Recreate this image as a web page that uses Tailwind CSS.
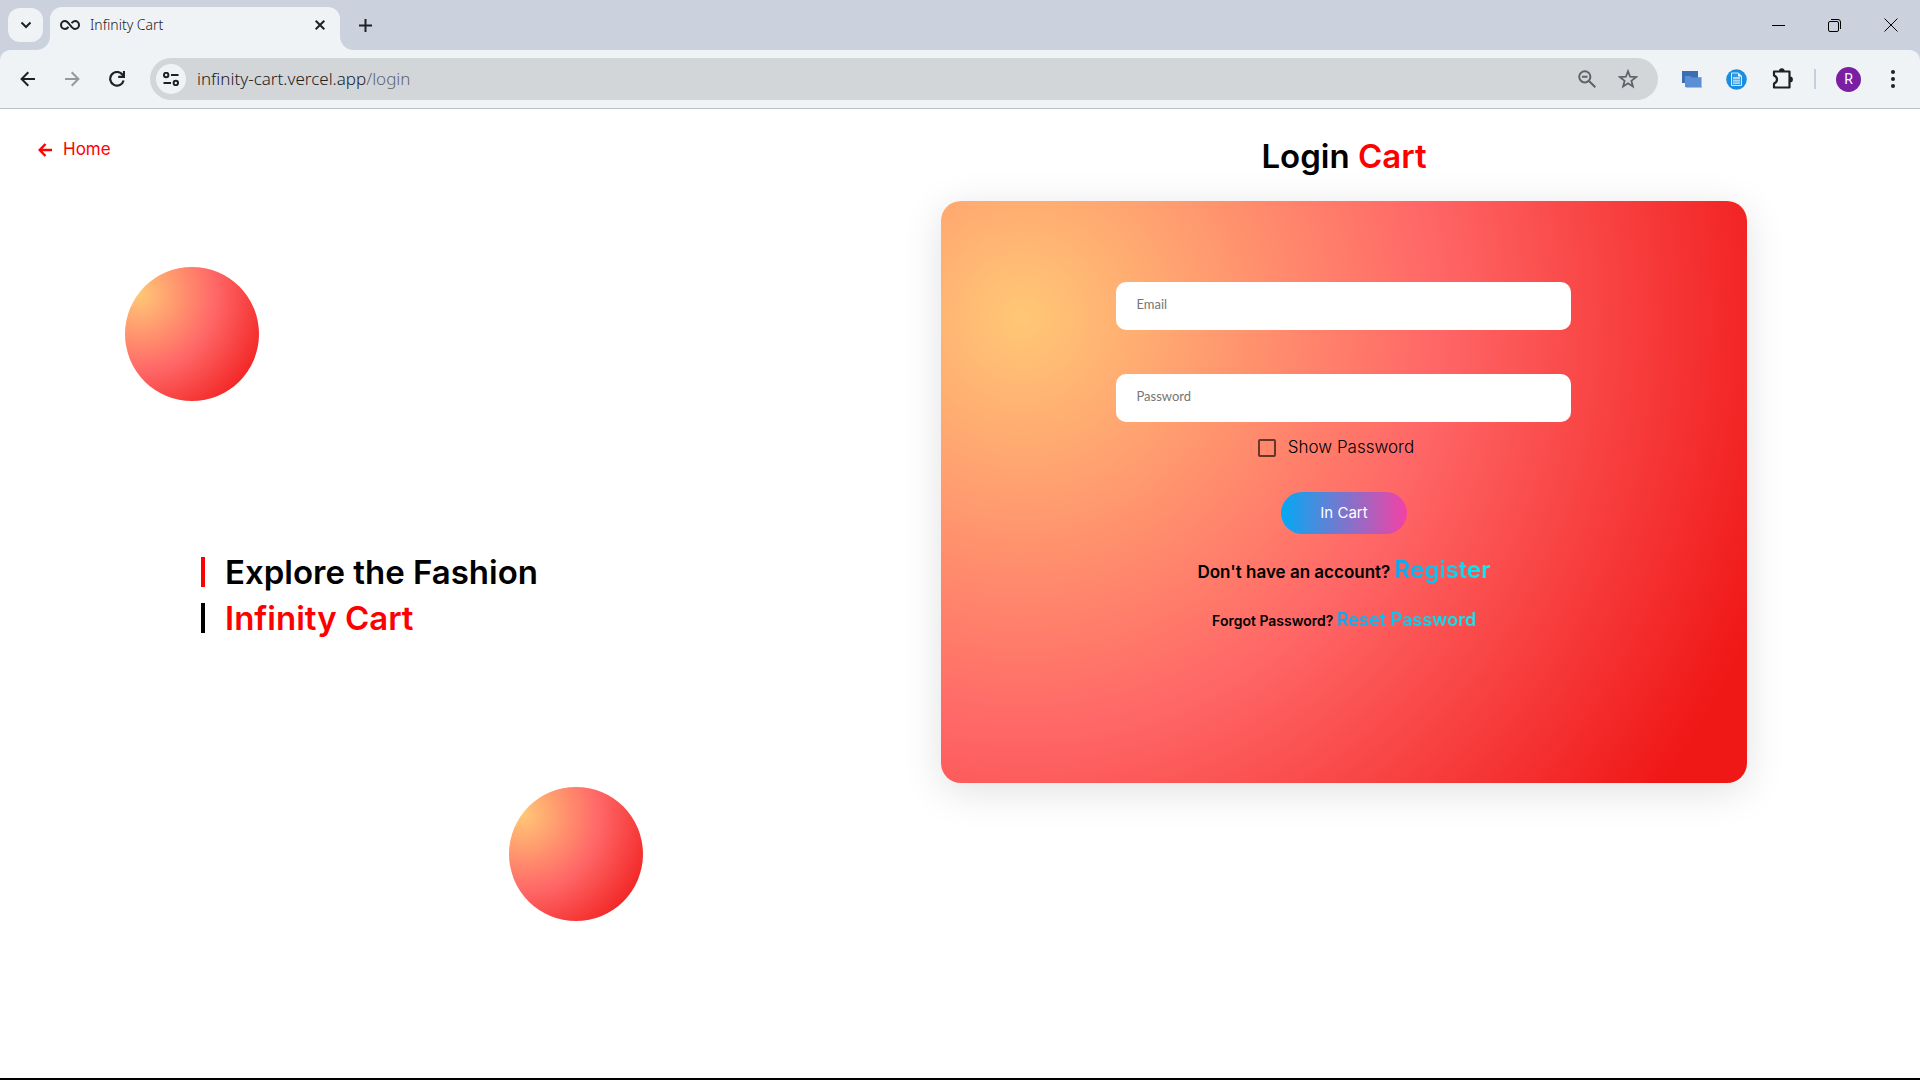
<!DOCTYPE html>
<html lang="en">
<head>
<meta charset="utf-8">
<title>Infinity Cart</title>
<script src="https://cdn.jsdelivr.net/npm/@tailwindcss/browser@4"></script>
</head>
<body class="flex min-h-screen flex-col bg-white font-['Inter',sans-serif] text-black">
<header class="bg-[#cbd2de] font-['Noto_Sans',sans-serif]">
  <div class="flex h-[50px] items-end pl-2">
    <button aria-label="Search tabs" class="mb-2 grid h-[34px] w-[35px] place-items-center rounded-xl bg-[#eff3f6]">
      <svg class="size-3" viewBox="0 0 12 12" fill="none" stroke="#1f2023" stroke-width="2"><path d="M1.500 3.500 6 8l4.500-4.500"/></svg>
    </button>
    <svg class="ml-[-7px] size-[14px] shrink-0" viewBox="0 0 14 14" fill="#eff3f6"><path d="M14 0v14H0C8 14 14 8 14 0z"/></svg>
    <div class="flex h-[43px] w-[290px] items-center rounded-t-xl bg-[#eff3f6] pr-[15px] pb-[7px] pl-[10px]">
      <svg class="h-[12px] w-5" viewBox="0 0 20 12" fill="none" stroke="#1f2023" stroke-width="2"><path d="M11.500 4.200C13 2.500 13.800 2 15 2a4 4 0 0 1 0 8c-2 0-3-1.300-5-4S7 2 5 2a4 4 0 0 0 0 8c1.300 0 2.200-.5 3.500-2.200"/></svg>
      <span class="ml-[10px] text-sm font-light text-[#1f2023]">Infinity Cart</span>
      <button aria-label="Close tab" class="ml-auto"><svg class="size-[10px]" viewBox="0 0 10 10" stroke="#1f2023" stroke-width="2"><path d="m.7.700 8.600 8.600M9.300.700.700 9.300"/></svg></button>
    </div>
    <svg class="size-[14px] shrink-0" viewBox="0 0 14 14" fill="#eff3f6"><path d="M0 0v14h14C6 14 0 8 0 0z"/></svg>
    <button aria-label="New tab" class="mb-[18px] ml-[5px]"><svg class="size-[13px]" viewBox="0 0 13 13" stroke="#1f2023" stroke-width="2"><path d="M6.500 0v13M0 6.500h13"/></svg></button>
    <div class="mr-[22px] mb-[18px] ml-auto flex items-center gap-[43px]">
      <button aria-label="Minimize"><svg class="size-[13px]" viewBox="0 0 13 13" stroke="#000"><path d="M0 6.500h13"/></svg></button>
      <button aria-label="Restore"><svg class="size-[13px]" viewBox="0 0 13 13" fill="none" stroke="#000"><rect x=".5" y="2.500" width="10" height="10" rx="1.500"/><path d="M3 .500h7A2.500 2.500 0 0 1 12.500 3v7"/></svg></button>
      <button aria-label="Close"><svg class="size-[14px]" viewBox="0 0 14 14" stroke="#000"><path d="m.5.500 13 13M13.500.500l-13 13"/></svg></button>
    </div>
  </div>
  <div class="flex h-[59px] items-center rounded-t-[10px] border-b border-[#bcc1c7] bg-[#eff3f6] pr-[25px] pl-5">
    <button aria-label="Back"><svg class="size-4" viewBox="0 0 16 16" fill="none" stroke="#1f2023" stroke-width="2"><path d="M15 8H2M8.300 1.300 1.600 8l6.700 6.700"/></svg></button>
    <button aria-label="Forward" class="ml-7"><svg class="size-4" viewBox="0 0 16 16" fill="none" stroke="#96999c" stroke-width="2"><path d="M1 8h13M7.700 1.300 14.400 8l-6.700 6.700"/></svg></button>
    <button aria-label="Reload" class="ml-[29px]"><svg class="size-4" viewBox="0 0 16 16" fill="none" stroke="#1f2023" stroke-width="2.200"><path d="M14.600 9.500A6.800 6.800 0 1 1 13.300 3.500L14.500 5"/><path d="M15 0v5.800H9.200"/></svg></button>
    <div class="ml-[25px] flex h-[42px] flex-1 items-center rounded-full bg-[#d2d6d9] pr-5 pl-[6px]">
      <button aria-label="Site information" class="grid size-[30px] shrink-0 place-items-center rounded-full bg-[#eff3f6]"><svg class="h-[14px] w-4" viewBox="0 0 16 14" fill="none" stroke="#1f2023" stroke-width="2"><circle cx="3.200" cy="3" r="2.200"/><path d="M8 3h7.500M.500 11H8"/><circle cx="12.800" cy="11" r="2.200"/></svg></button>
      <div class="ml-[11px] text-[17px] leading-6 font-light text-[#5f6368]"><span class="text-[#1f2023]">infinity-cart.vercel.app</span>/login</div>
      <button aria-label="Zoom" class="ml-auto"><svg class="size-[18px]" viewBox="0 0 18 18" fill="none" stroke="#5f6368" stroke-width="2"><circle cx="6.800" cy="6.800" r="5.600"/><path d="m11 11 6.300 6.300M4 6.800h5.500"/></svg></button>
      <button aria-label="Bookmark" class="ml-[22px]"><svg class="size-5" viewBox="0 0 20 20" fill="none" stroke="#5f6368" stroke-width="1.800"><path d="m10 2.200 2.100 5.500 5.900.4-4.600 3.700 1.500 5.700L10 14.300l-4.900 3.200 1.500-5.700L2 8.100l5.900-.4z"/></svg></button>
    </div>
    <div class="ml-6 flex items-center">
      <svg class="size-5" viewBox="0 0 20 20"><path d="M4 8h16v11H4z" fill="#b7bcc2"/><path d="M0 2h16v12H0z" fill="#3a6fb3"/><path d="M3 7h5l2 1.500h9V18H3z" fill="#5b8fd3"/></svg>
      <svg class="ml-6 size-[21px]" viewBox="0 0 21 21"><circle cx="10.500" cy="10.500" r="10.300" fill="#1b8de0"/><path d="M5.500 4h7l3 3V16.500h-10z" fill="#2f97e2" stroke="#d5ecfb"/><path d="M12 4v3.500h3.500z" fill="#fff"/><path d="M7 8h7v7H7z" fill="#a8d6f6"/><path d="M7 10.500h7M7 13h7" stroke="#5db0ea"/></svg>
      <svg class="ml-[25px] size-[22px]" viewBox="0 0 22 22"><path d="M2 3.500h15.500V19.500H2V15.500c4-1.500 4-6.500 0-8z" fill="none" stroke="#1f2023" stroke-width="2.200" stroke-linejoin="round"/><path d="M7 3a2.800 2.800 0 0 1 5.600 0zM18 8.500a2.900 2.900 0 0 1 0 5.800z" fill="#1f2023"/></svg>
      <span class="ml-5 h-5 w-[2px] bg-[#c5cede]"></span>
      <button class="ml-5 grid size-[25px] place-items-center rounded-full bg-[#7b1fa2] font-['Roboto',sans-serif] text-sm leading-none text-white">R</button>
      <button aria-label="Menu" class="ml-[30px]"><svg class="h-[18px] w-1" viewBox="0 0 4 18" fill="#1f2023"><circle cx="2" cy="2" r="2"/><circle cx="2" cy="9" r="2"/><circle cx="2" cy="16" r="2"/></svg></button>
    </div>
  </div>
</header>
<main class="grid flex-1 grid-cols-[49%_42%] border-b-2 border-black">
  <section class="pt-[29px] pl-[38px]">
    <a href="#" class="flex h-6 w-fit items-center gap-[11px] text-[17px] text-[#f00]">
      <svg class="size-[14px]" viewBox="0 0 14 14" fill="none" stroke="#f00" stroke-width="2.400"><path d="M14 7H2M7.500 1 1.700 7l5.800 6"/></svg>Home</a>
    <div class="mt-[105px] ml-[87px] size-[134px] rounded-full bg-[radial-gradient(circle_at_10%_20%,#ffc876_0%,#ff6767_48%,#f01717_92%)]"></div>
    <h1 class="mt-[148px] ml-[163px] flex flex-col text-[33px] leading-[46px] font-semibold">
      <span class="flex items-center gap-5"><i class="h-[30px] w-1 bg-[#f00]"></i>Explore the Fashion</span>
      <span class="flex items-center gap-5 text-[#f00]"><i class="h-[30px] w-1 bg-black"></i>Infinity Cart</span>
    </h1>
    <div class="mt-[146px] ml-[471px] size-[134px] rounded-full bg-[radial-gradient(circle_at_10%_20%,#ffc876_0%,#ff6767_48%,#f01717_92%)]"></div>
  </section>
  <section class="pt-6">
    <h2 class="text-center text-[33px] leading-[46px] font-semibold">Login <span class="text-[#f00]">Cart</span></h2>
    <form class="mt-[22px] flex h-[582px] flex-col items-center rounded-[20px] bg-[radial-gradient(circle_at_10%_20%,#ffc876_0%,#ff6767_48%,#f01717_92%)] pt-[81px] shadow-[0_8px_40px_rgba(0,0,0,0.12)]">
      <input type="email" aria-label="Email" placeholder="Email" class="h-12 w-[455px] rounded-[10px] bg-white px-5 pb-1 font-['Lato',sans-serif] text-[13px] placeholder:text-[#757575]">
      <input type="password" aria-label="Password" placeholder="Password" class="mt-11 h-12 w-[455px] rounded-[10px] bg-white px-5 pb-1 font-['Lato',sans-serif] text-[13px] placeholder:text-[#757575]">
      <label class="mt-[14px] mr-4 flex h-6 items-center gap-3 text-[17px] font-light"><input type="checkbox" class="size-[18px] appearance-none rounded-[2px] border-2 border-black/60">Show Password</label>
      <button type="button" class="mt-8 h-[42px] w-[126px] rounded-full bg-linear-to-r/srgb from-[#03a9f4] to-[#f441a5] text-[15px] text-white">In Cart</button>
      <p class="mt-[18px] text-[17px] leading-9 font-semibold">Don't have an account? <a href="#" class="bg-linear-to-r/srgb from-[#03a9f4] to-[#00f5f5] bg-clip-text text-2xl leading-9 font-semibold text-transparent">Register</a></p>
      <p class="mt-4 text-sm leading-7 font-semibold">Forgot Password? <a href="#" class="bg-linear-to-r/srgb from-[#03a9f4] to-[#00f5f5] bg-clip-text text-lg leading-7 font-semibold text-transparent">Reset Password</a></p>
    </form>
  </section>
</main>
</body>
</html>
